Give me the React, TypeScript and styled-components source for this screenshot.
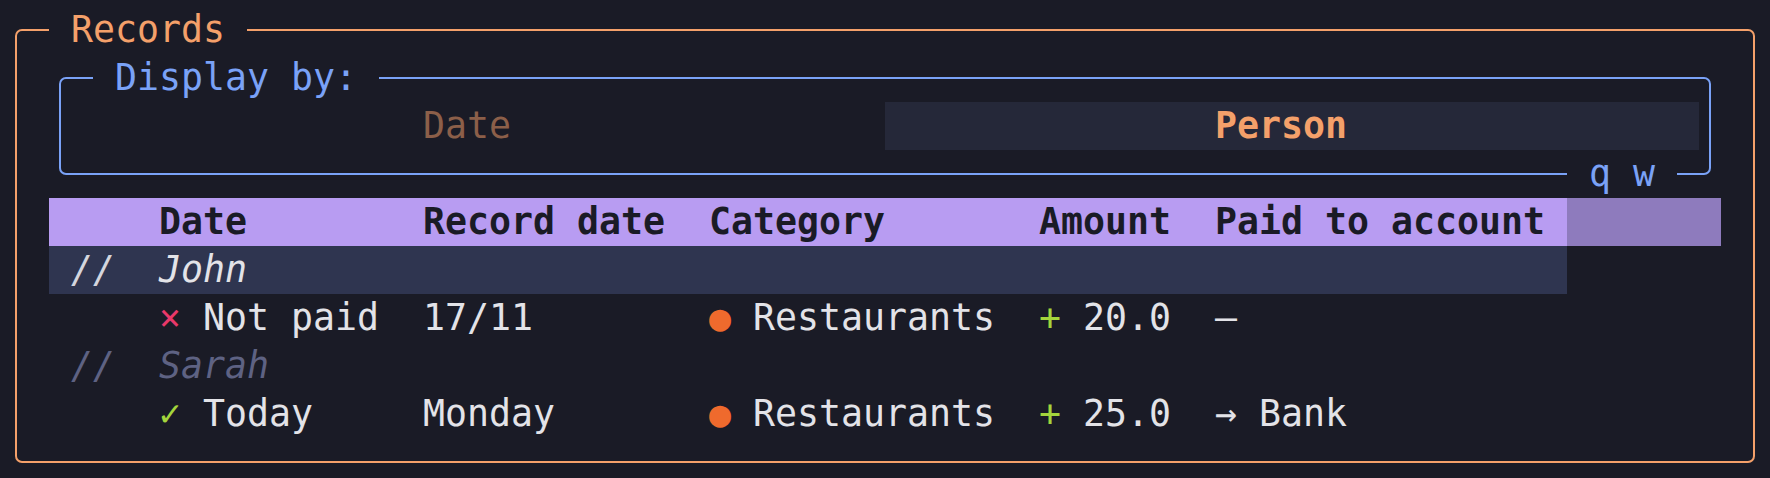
import React from "react";
import styled, { createGlobalStyle } from "styled-components";

const c = {
  bg: "#1a1b26",
  text: "#e3e3e8",
  orange: "#f4a06a",
  blue: "#7aa2f7",
  dimOrange: "#8c5f49",
  purple: "#b89cf2",
  purpleDark: "#8e7bbd",
  selected: "#2f3550",
  highlight: "#252839",
  muted: "#5e6283",
  red: "#e8386a",
  green: "#a4d53c",
  dot: "#ef6a2d",
  dark: "#1a1b26",
};

const GlobalStyle = createGlobalStyle`
  html, body {
    margin: 0;
    padding: 0;
    background: ${c.bg};
  }
  body {
    font-family: "DejaVu Sans Mono", "Liberation Mono", monospace;
    font-size: 36.54px;
    line-height: 48px;
    color: ${c.text};
  }
`;

const Screen = styled.div`
  width: 1770px;
  height: 478px;
  box-sizing: border-box;
  padding: 6px 15px 0;
  overflow: hidden;
`;

const Panel = styled.fieldset<{ $color: string; $pad: number; $inset?: number; $gapBelow?: number }>`
  position: relative;
  margin: 0 ${(p) => p.$inset ?? 0}px ${(p) => p.$gapBelow ?? 0}px;
  padding: 0 ${(p) => p.$pad}px 23px;
  min-width: 0;
  border: 2px solid ${(p) => p.$color};
  border-radius: 7px;
`;

const Legend = styled.legend<{ $color: string; $indent: number }>`
  margin-left: ${(p) => p.$indent}px;
  padding: 0 22px;
  color: ${(p) => p.$color};
  line-height: 48px;
  white-space: pre;
`;

const KeyHints = styled.div`
  position: absolute;
  right: 32px;
  bottom: -25px;
  padding: 0 22px;
  background: ${c.bg};
  color: ${c.blue};
  white-space: pre;
`;

const Toggle = styled.div`
  display: grid;
  grid-template-columns: 1fr 1fr;
`;

const ToggleOption = styled.div<{ $active?: boolean }>`
  padding-right: 22px;
  text-align: center;
  background: ${(p) => (p.$active ? c.highlight : "transparent")};
  color: ${(p) => (p.$active ? c.orange : c.dimOrange)};
  font-weight: ${(p) => (p.$active ? 700 : 400)};
`;

const Table = styled.div`
  display: flex;
  flex-direction: column;
`;

const HeaderBand = styled.div`
  background: ${c.purpleDark};
`;

type RowKind = "header" | "selected" | "plain";

const Row = styled.div<{ $kind: RowKind }>`
  display: grid;
  grid-template-columns: 44px 220px 242px 286px 132px 330px;
  column-gap: 44px;
  width: 1518px;
  box-sizing: border-box;
  padding: 0 22px;
  white-space: pre;
  background: ${(p) =>
    p.$kind === "header" ? c.purple : p.$kind === "selected" ? c.selected : "transparent"};
  color: ${(p) => (p.$kind === "header" ? c.dark : c.text)};
  font-weight: ${(p) => (p.$kind === "header" ? 700 : 400)};
`;

const GroupMark = styled.span<{ $muted?: boolean }>`
  font-style: italic;
  color: ${(p) => (p.$muted ? c.muted : "#d4d5de")};
`;

const GroupName = styled.span<{ $muted?: boolean }>`
  grid-column: 2 / -1;
  font-style: italic;
  color: ${(p) => (p.$muted ? c.muted : c.text)};
`;

const Glyph = styled.span<{ $color: string }>`
  color: ${(p) => p.$color};
`;

const Cell = styled.span``;

type Rec = {
  person: string;
  selected: boolean;
  paid: boolean;
  date: string;
  recordDate: string;
  category: string;
  amount: string;
  account: string | null;
};

const records: Rec[] = [
  {
    person: "John",
    selected: true,
    paid: false,
    date: "Not paid",
    recordDate: "17/11",
    category: "Restaurants",
    amount: "20.0",
    account: null,
  },
  {
    person: "Sarah",
    selected: false,
    paid: true,
    date: "Today",
    recordDate: "Monday",
    category: "Restaurants",
    amount: "25.0",
    account: "Bank",
  },
];

export default function App() {
  return (
    <>
      <GlobalStyle />
      <Screen>
        <Panel $color={c.orange} $pad={32}>
          <Legend $color={c.orange} $indent={0}>
            Records
          </Legend>
          <Panel $color={c.blue} $pad={10} $inset={10} $gapBelow={23}>
            <Legend $color={c.blue} $indent={22}>
              Display by:
            </Legend>
            <Toggle>
              <ToggleOption>Date</ToggleOption>
              <ToggleOption $active>Person</ToggleOption>
            </Toggle>
            <KeyHints>q w</KeyHints>
          </Panel>
          <Table>
            <HeaderBand>
              <Row $kind="header">
                <Cell />
                <Cell>Date</Cell>
                <Cell>Record date</Cell>
                <Cell>Category</Cell>
                <Cell>Amount</Cell>
                <Cell>Paid to account</Cell>
              </Row>
            </HeaderBand>
            {records.map((r) => (
              <React.Fragment key={r.person}>
                <Row $kind={r.selected ? "selected" : "plain"}>
                  <GroupMark $muted={!r.selected}>//</GroupMark>
                  <GroupName $muted={!r.selected}>{r.person}</GroupName>
                </Row>
                <Row $kind="plain">
                  <Cell />
                  <Cell>
                    {r.paid ? <Glyph $color={c.green}>✓</Glyph> : <Glyph $color={c.red}>×</Glyph>}{" "}
                    {r.date}
                  </Cell>
                  <Cell>{r.recordDate}</Cell>
                  <Cell>
                    <Glyph $color={c.dot}>●</Glyph> {r.category}
                  </Cell>
                  <Cell>
                    <Glyph $color={c.green}>+</Glyph> {r.amount}
                  </Cell>
                  <Cell>{r.account ? `→ ${r.account}` : "–"}</Cell>
                </Row>
              </React.Fragment>
            ))}
          </Table>
        </Panel>
      </Screen>
    </>
  );
}
